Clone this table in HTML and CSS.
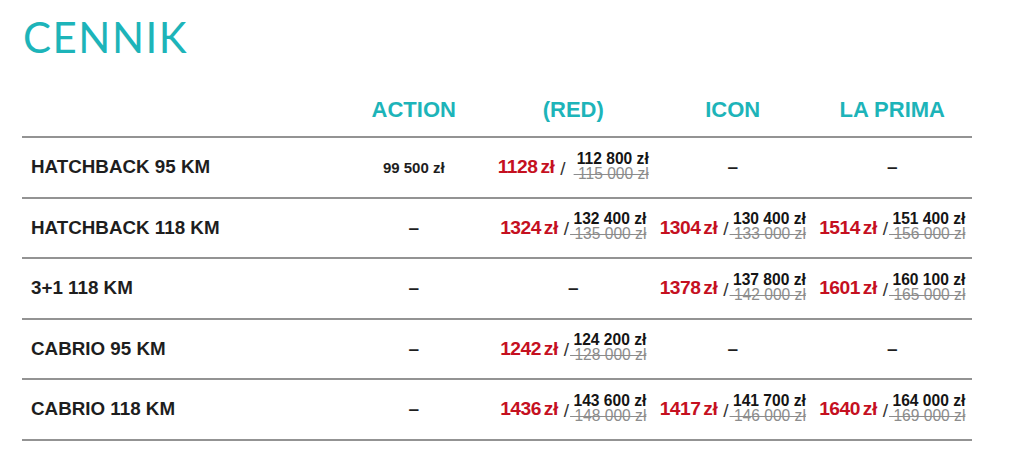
FILE: index.html
```html
<!DOCTYPE html>
<html lang="pl">
<head>
<meta charset="utf-8">
<title>Cennik</title>
<link rel="stylesheet" href="styles.css">
</head>
<body>
<div class="page">
  <h1 class="title">CENNIK</h1>
  <div class="table">
    <div class="row head">
      <div class="label"></div>
      <div class="col-head">ACTION</div>
      <div class="col-head">(RED)</div>
      <div class="col-head">ICON</div>
      <div class="col-head">LA PRIMA</div>
    </div>

    <div class="row">
      <div class="label">HATCHBACK 95 KM</div>
      <div class="cell"><span class="plain">99 500 zł</span></div>
      <div class="cell"><div class="price"><span class="monthly">1128<span class="cur">zł</span></span><span class="slash wide">/</span><span class="stack"><span class="now">112 800 zł</span><s class="old">&nbsp;115 000 zł</s></span></div></div>
      <div class="cell"><span class="dash">–</span></div>
      <div class="cell"><span class="dash">–</span></div>
    </div>

    <div class="row">
      <div class="label">HATCHBACK 118 KM</div>
      <div class="cell"><span class="dash">–</span></div>
      <div class="cell"><div class="price"><span class="monthly">1324<span class="cur">zł</span></span><span class="slash">/</span><span class="stack"><span class="now">132 400 zł</span><s class="old">&nbsp;135 000 zł</s></span></div></div>
      <div class="cell"><div class="price"><span class="monthly">1304<span class="cur">zł</span></span><span class="slash">/</span><span class="stack"><span class="now">130 400 zł</span><s class="old">&nbsp;133 000 zł</s></span></div></div>
      <div class="cell"><div class="price"><span class="monthly">1514<span class="cur">zł</span></span><span class="slash">/</span><span class="stack"><span class="now">151 400 zł</span><s class="old">&nbsp;156 000 zł</s></span></div></div>
    </div>

    <div class="row">
      <div class="label">3+1 118 KM</div>
      <div class="cell"><span class="dash">–</span></div>
      <div class="cell"><span class="dash">–</span></div>
      <div class="cell"><div class="price"><span class="monthly">1378<span class="cur">zł</span></span><span class="slash">/</span><span class="stack"><span class="now">137 800 zł</span><s class="old">&nbsp;142 000 zł</s></span></div></div>
      <div class="cell"><div class="price"><span class="monthly">1601<span class="cur">zł</span></span><span class="slash">/</span><span class="stack"><span class="now">160 100 zł</span><s class="old">&nbsp;165 000 zł</s></span></div></div>
    </div>

    <div class="row">
      <div class="label">CABRIO 95 KM</div>
      <div class="cell"><span class="dash">–</span></div>
      <div class="cell"><div class="price"><span class="monthly">1242<span class="cur">zł</span></span><span class="slash">/</span><span class="stack"><span class="now">124 200 zł</span><s class="old">&nbsp;128 000 zł</s></span></div></div>
      <div class="cell"><span class="dash">–</span></div>
      <div class="cell"><span class="dash">–</span></div>
    </div>

    <div class="row last">
      <div class="label">CABRIO 118 KM</div>
      <div class="cell"><span class="dash">–</span></div>
      <div class="cell"><div class="price"><span class="monthly">1436<span class="cur">zł</span></span><span class="slash">/</span><span class="stack"><span class="now">143 600 zł</span><s class="old">&nbsp;148 000 zł</s></span></div></div>
      <div class="cell"><div class="price"><span class="monthly">1417<span class="cur">zł</span></span><span class="slash">/</span><span class="stack"><span class="now">141 700 zł</span><s class="old">&nbsp;146 000 zł</s></span></div></div>
      <div class="cell"><div class="price"><span class="monthly">1640<span class="cur">zł</span></span><span class="slash">/</span><span class="stack"><span class="now">164 000 zł</span><s class="old">&nbsp;169 000 zł</s></span></div></div>
    </div>
  </div>
</div>
</body>
</html>
```

FILE: styles.css
```css
html, body {
  margin: 0;
  padding: 0;
  background: #ffffff;
}

body {
  font-family: "Liberation Sans", Arial, sans-serif;
  color: #1e1e1e;
}

.page {
  padding: 12px 0 0 22px;
  width: 950px;
}

.title {
  margin: 0 0 0 1px;
  font-family: "Lato", "Open Sans", sans-serif;
  font-weight: 400;
  font-size: 42px;
  line-height: 50px;
  color: #1db4b9;
  letter-spacing: 1.5px;
}

.table {
  display: flex;
  flex-direction: column;
  border-bottom: 2px solid #939393;
}

.row {
  display: grid;
  grid-template-columns: 312px repeat(4, 159.5px);
  height: 60.5px;
  box-sizing: border-box;
  border-top: 2px solid #939393;
  align-items: center;
}

.row.head {
  height: 74px;
  border-top: none;
  align-items: end;
  padding-bottom: 13.5px;
}

.col-head {
  text-align: center;
  font-weight: 700;
  font-size: 22px;
  line-height: 26px;
  color: #1db4b9;
}

.label {
  padding-left: 9px;
  font-weight: 700;
  font-size: 18.8px;
  color: #1e1e1e;
}

.cell {
  display: flex;
  justify-content: center;
  align-items: center;
}

.plain {
  font-weight: 700;
  font-size: 15px;
  color: #1e1e1e;
}

.dash {
  font-weight: 700;
  font-size: 19px;
  color: #1e1e1e;
}

.price {
  display: flex;
  align-items: center;
}

.monthly {
  font-weight: 700;
  font-size: 19.2px;
  letter-spacing: -0.5px;
  color: #c5101f;
}

.cur {
  margin-left: 3px;
}

.slash {
  font-size: 19px;
  font-weight: 400;
  color: #333333;
  margin: 3px 1px 0 6px;
}

.slash.wide {
  margin: 3px 8px 0 6px;
}

.stack {
  display: flex;
  flex-direction: column;
  align-items: flex-end;
  font-size: 15.6px;
  line-height: 14.5px;
  margin-top: -2px;
}

.now {
  font-weight: 700;
  color: #151515;
}

.old {
  font-weight: 400;
  color: #8c8c8c;
  text-decoration: line-through;
  margin-top: 0.5px;
}
```
